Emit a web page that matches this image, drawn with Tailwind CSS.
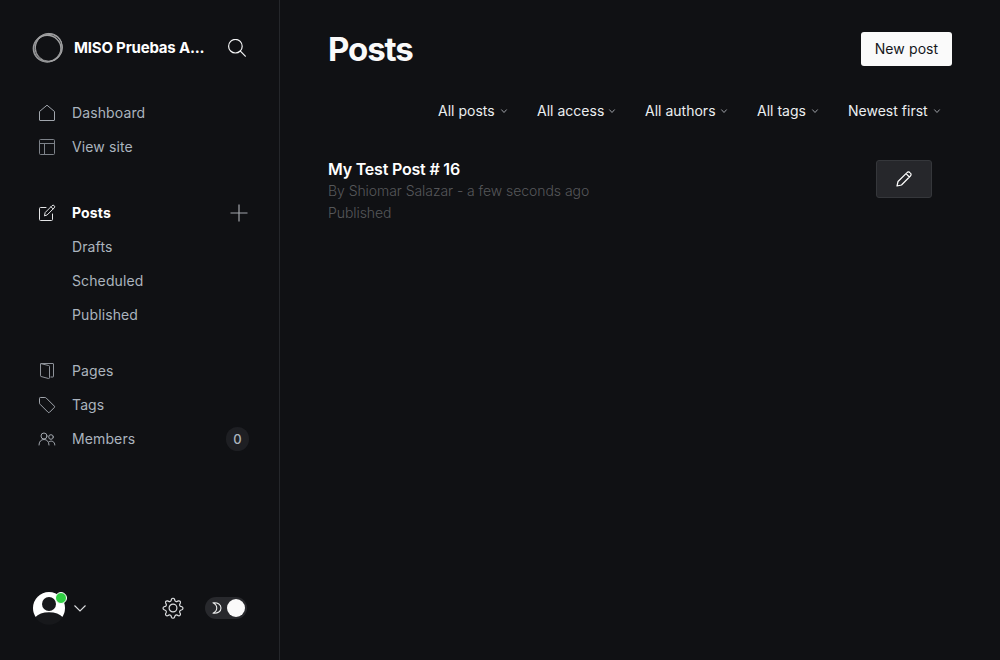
<!DOCTYPE html>
<html lang="en">
<head>
<meta charset="utf-8">
<title>Posts</title>
<script src="https://cdn.jsdelivr.net/npm/@tailwindcss/browser@4"></script>
</head>
<body class="flex h-screen w-screen overflow-hidden bg-[#101114] font-['Inter',sans-serif] text-[#abb4be]">
<aside class="flex w-[280px] shrink-0 flex-col border-r border-[#25272b] pt-8 pb-8">
  <header class="flex h-8 items-center pl-8 pr-8">
    <svg class="size-8 shrink-0" viewBox="0 0 32 32" fill="none" stroke="#a5a5a6">
      <ellipse cx="15.2" cy="16.600" rx="13.800" ry="13.300" stroke-width="1.500" stroke="#a0a1a2"/>
      <ellipse cx="16.600" cy="15.500" rx="13.500" ry="13.900" stroke-width=".9" transform="rotate(40 16 16)"/>
      <ellipse cx="16.300" cy="15.500" rx="14.600" ry="13.400" stroke-width="1" stroke="#8f9092" transform="rotate(-46 16 16)"/>
      <ellipse cx="16.800" cy="15.300" rx="13.500" ry="13.900" stroke-width=".8"/>
    </svg>
    <span class="ml-[10px] w-[134px] whitespace-nowrap text-[15px] font-bold leading-5 tracking-[-0.2px] text-white">MISO Pruebas A...</span>
    <svg class="ml-5 size-[18px] shrink-0" viewBox="0 0 18 18" fill="none" stroke="#f4f5f6" stroke-width="1.2" stroke-linecap="round"><circle cx="7.4" cy="7.2" r="6.800"/><path d="M12.4 12.2 17.3 17.2"/></svg>
  </header>
  <nav class="mt-8 flex flex-col text-[14px] leading-[34px] tracking-[0.12px]">
    <a class="flex h-[34px] items-center pl-[38px]">
      <svg class="mr-4 size-[18px]" viewBox="0 0 18 18" fill="none" stroke="#a1a6ad" stroke-linejoin="round"><path d="M1.5 7.5 9 1.2l7.500 6.300v8.500a.5.5 0 0 1-.5.5H2a.5.5 0 0 1-.5-.5z"/></svg>Dashboard</a>
    <a class="flex h-[34px] items-center pl-[38px]">
      <svg class="mr-4 size-[18px]" viewBox="0 0 18 18" fill="none" stroke="#7d8289"><rect x="1.500" y="1.500" width="15" height="15" rx="1"/><path d="M1.500 5.500h15M6.500 5.500v11"/></svg>View site</a>
    <a class="mt-8 flex h-[34px] items-center pl-[38px] pr-[31px] font-bold text-white">
      <svg class="mr-4 size-[18px]" viewBox="0 0 18 18" fill="none" stroke="#e4e5e7" stroke-linejoin="round" stroke-linecap="round"><path d="M8 3.500H2.500a1 1 0 0 0-1 1v11a1 1 0 0 0 1 1h11a1 1 0 0 0 1-1V10"/><path d="m6.500 11.500.7-3L14 1.700a1.500 1.500 0 0 1 2.200 2.200l-6.800 6.800zM13 2.800l2.100 2.100"/></svg><span>Posts</span>
      <svg class="ml-auto size-[18px]" viewBox="0 0 18 18" fill="none" stroke="#a2a6ab" stroke-width="1.200"><path d="M9 .5v17M.5 9h17"/></svg></a>
    <a class="h-[34px] pl-[72px]">Drafts</a>
    <a class="h-[34px] pl-[72px]">Scheduled</a>
    <a class="h-[34px] pl-[72px]">Published</a>
    <a class="mt-[22px] flex h-[34px] items-center pl-[38px]">
      <svg class="mr-4 size-[18px]" viewBox="0 0 18 18" fill="none" stroke="#8e939a" stroke-linejoin="round"><path d="M10.500 16.500 3 14.500a.7.700 0 0 1-.5-.7V2a.5.5 0 0 1 .5-.5h12a.5.5 0 0 1 .5.5v12.500a.5.5 0 0 1-.5.5h-2.500M2.700 1.600l7.800 1.900a1 1 0 0 1 1 1v11.300a.7.700 0 0 1-1 .7"/></svg>Pages</a>
    <a class="flex h-[34px] items-center pl-[38px]">
      <svg class="mr-4 size-[18px]" viewBox="0 0 18 18" fill="none" stroke="#a1a6ad" stroke-linejoin="round"><path d="M1.500 2.300a.8.800 0 0 1 .8-.8h4.600a2 2 0 0 1 1.400.6l8 8a1 1 0 0 1 0 1.400l-4.800 4.800a1 1 0 0 1-1.400 0l-8-8a2 2 0 0 1-.6-1.400z"/></svg>Tags</a>
    <a class="flex h-[34px] items-center pl-[38px] pr-[30px]">
      <svg class="mr-4 size-[18px]" viewBox="0 0 18 18" fill="none" stroke="#a1a6ad" stroke-linecap="round"><circle cx="6" cy="6" r="3"/><circle cx="13" cy="7" r="2.300"/><path d="M1 15c0-3.500 2-5.500 5-5.500s5 2 5 5.500M11.500 11.500c2.500-1.200 5.300.2 5.300 3.500"/></svg>Members
      <span class="ml-auto grid h-6 w-[23px] place-items-center rounded-full bg-[#1e1f23] text-[13px] font-medium leading-6 tracking-normal">0</span></a>
  </nav>
  <footer class="mt-auto flex h-10 items-center pl-8 pr-8">
    <div class="relative mr-[9px] size-8">
      <svg class="block size-[34px]" viewBox="0 0 34 34"><defs><clipPath id="torso"><path d="M0 0h34v25.500h-3c-3-3.500-8-5.300-14-5.300s-11 1.800-14 5.300H0z"/></clipPath></defs><circle cx="17" cy="16.500" r="16.200" fill="#17181b"/><circle cx="17" cy="16" r="16" fill="#fff" clip-path="url(#torso)"/><circle cx="17" cy="12" r="7" fill="#17181b"/></svg>
      <span class="absolute left-[23px] top-0 size-3 rounded-full border border-white bg-[#30cf43]"></span>
    </div>
    <svg class="h-[10px] w-[14px]" viewBox="0 0 14 10" fill="none" stroke="#dddfe1" stroke-width="1.100"><path d="m1.500 2.500 5.500 5.500 5.500-5.500"/></svg>
    <svg class="ml-[75px] size-[22px]" viewBox="0 0 22 22" fill="none" stroke="#dddfe1" stroke-width="1.200" stroke-linejoin="round"><circle cx="11" cy="11" r="3.900"/><path d="M9.500 2.300a1.600 1.600 0 0 1 3 0l.4 1.200a1.700 1.700 0 0 0 2.300.9l1.200-.5a1.600 1.600 0 0 1 2 2l-.6 1.200a1.700 1.700 0 0 0 .9 2.300l1.200.4a1.600 1.600 0 0 1 0 3l-1.200.4a1.700 1.700 0 0 0-.9 2.300l.6 1.200a1.600 1.600 0 0 1-2 2l-1.200-.6a1.700 1.700 0 0 0-2.300 1l-.4 1.100a1.600 1.600 0 0 1-3 0l-.4-1.200a1.700 1.700 0 0 0-2.300-.9l-1.200.6a1.600 1.600 0 0 1-2-2l.6-1.200a1.700 1.700 0 0 0-1-2.300l-1.100-.4a1.600 1.600 0 0 1 0-3l1.200-.4a1.700 1.700 0 0 0 .9-2.300l-.6-1.200a1.600 1.600 0 0 1 2-2l1.200.5a1.700 1.700 0 0 0 2.300-.9z"/></svg>
    <div class="ml-[21px] flex h-[22px] w-[42px] shrink-0 items-center justify-between rounded-full bg-[#28292d] pl-[7px] pr-[2px]">
      <svg class="h-3 w-[10px]" viewBox="0 0 10 12" fill="none" stroke="#eceded" stroke-width="1.100" stroke-linejoin="round"><path d="M1 .8c5-.6 8 2 8 5.200s-3 5.800-8 5.200c5-2.600 5-7.800 0-10.400z"/></svg>
      <span class="size-[18px] rounded-full bg-[#fafafa]"></span>
    </div>
  </footer>
</aside>
<main class="flex grow flex-col pl-12 pr-12 pt-8">
  <header class="flex h-[34px] items-center justify-between">
    <h1 class="text-[33px] font-bold leading-[34px] tracking-[-1.1px] text-[#fafafa]">Posts</h1>
    <button class="h-[34px] w-[91px] rounded-[3px] bg-[#fafafa] pb-px text-[14px] leading-[33px] tracking-[0.1px] text-[#15171a]">New post</button>
  </header>
  <div class="mt-[35px] flex h-5 items-center justify-end pr-[11px] text-[14px] leading-5 tracking-[0.01px] text-[#ebeef0]">
    <div class="flex w-[99px] items-center justify-between whitespace-nowrap"><span>All posts</span><svg class="mr-[29px] h-[6px] w-2 shrink-0" viewBox="0 0 8 6" fill="none" stroke="#9c9fa5"><path d="M1.300 1.500 4 4.500 6.700 1.500"/></svg></div>
    <div class="flex w-[108px] items-center justify-between whitespace-nowrap"><span>All access</span><svg class="mr-[29px] h-[6px] w-2 shrink-0" viewBox="0 0 8 6" fill="none" stroke="#9c9fa5"><path d="M1.300 1.500 4 4.500 6.700 1.500"/></svg></div>
    <div class="flex w-[112px] items-center justify-between whitespace-nowrap"><span>All authors</span><svg class="mr-[29px] h-[6px] w-2 shrink-0" viewBox="0 0 8 6" fill="none" stroke="#9c9fa5"><path d="M1.300 1.500 4 4.500 6.700 1.500"/></svg></div>
    <div class="flex w-[91px] items-center justify-between whitespace-nowrap"><span>All tags</span><svg class="mr-[29px] h-[6px] w-2 shrink-0" viewBox="0 0 8 6" fill="none" stroke="#9c9fa5"><path d="M1.300 1.500 4 4.500 6.700 1.500"/></svg></div>
    <div class="flex w-[93px] items-center justify-between whitespace-nowrap"><span>Newest first</span><svg class="h-[6px] w-2 shrink-0" viewBox="0 0 8 6" fill="none" stroke="#9c9fa5"><path d="M1.300 1.500 4 4.500 6.700 1.500"/></svg></div>
  </div>
  <article class="mt-[37px] flex justify-between pr-5">
    <div class="text-[14px] font-light leading-[22px] tracking-[-0.06px] text-[#56575a]">
      <h3 class="text-[16px] font-semibold leading-[22px] tracking-[-0.2px] text-white">My Test Post # 16</h3>
      <p>By Shiomar Salazar - a few seconds ago</p>
      <p>Published</p>
    </div>
    <a class="mt-[2px] grid h-[38px] w-14 place-items-center rounded-[3px] border border-[#35373b] bg-[#26272b]">
      <svg class="size-4" viewBox="0 0 16 16" fill="none" stroke="#fff" stroke-width="1.200" stroke-linejoin="round"><path d="m1 15 1-4.500L11 1.600a1.900 1.900 0 0 1 2.900 0l.5.5a1.900 1.900 0 0 1 0 2.900L5.500 14zM10 2.600 13.400 6"/></svg>
    </a>
  </article>
</main>
</body>
</html>
